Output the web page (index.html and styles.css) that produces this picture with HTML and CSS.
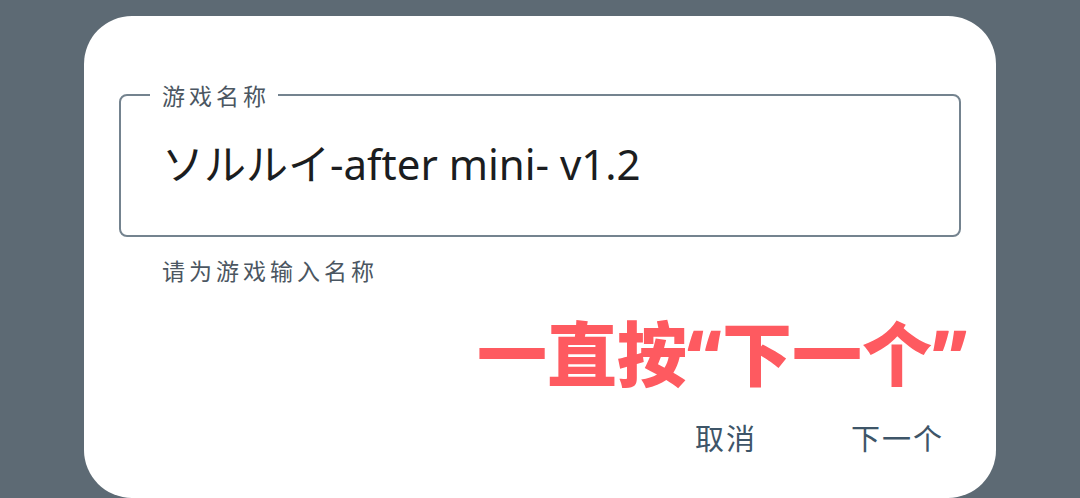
FILE: index.html
```html
<!DOCTYPE html>
<html lang="zh-CN">
<head>
    <meta charset="UTF-8">
    <meta name="viewport" content="width=device-width, initial-scale=1.0">
    <title>游戏名称</title>
    <link rel="stylesheet" href="styles.css">
</head>
<body>
    <div class="dialog">
        <fieldset class="field">
            <legend>游戏名称</legend>
            <div class="value">ソルルイ-after mini- v1.2</div>
        </fieldset>
        <p class="helper">请为游戏输入名称</p>
        <div class="hint">一直按“下一个”</div>
        <div class="actions">
            <button type="button">取消</button>
            <button type="button">下一个</button>
        </div>
    </div>
</body>
</html>
```

FILE: styles.css
```css
body {
    margin: 0;
    background: #5d6a74;
    font-family: "Noto Sans CJK SC", "Noto Sans", sans-serif;
    overflow: hidden;
}
.dialog {
    margin: 16px 0 0 84px;
    width: 912px;
    height: 482px;
    box-sizing: border-box;
    background: #ffffff;
    border-radius: 48px;
    padding: 67px 35px 0 35px;
}
.field {
    margin: 0;
    height: 154px;
    box-sizing: border-box;
    border: 2px solid #74838f;
    border-radius: 8px;
    padding: 0 0 0 41px;
}
.field legend {
    padding: 0 8px 0 12px;
    margin-left: -12px;
    font-size: 23px;
    line-height: 24px;
    color: #4b5661;
    letter-spacing: 4px;
}
.value {
    margin-top: 31px;
    font-family: "Noto Sans", "Noto Sans CJK JP", sans-serif;
    font-size: 42px;
    line-height: 52px;
    color: #1b1d20;
    white-space: nowrap;
}
.helper {
    margin: 19px 0 0 43px;
    font-size: 23px;
    line-height: 28px;
    color: #4b5661;
    letter-spacing: 4px;
}
.hint {
    margin: 30px 0 0 358px;
    font-family: "Noto Sans", "Noto Sans CJK SC", sans-serif;
    font-size: 70px;
    line-height: 80px;
    font-weight: 900;
    color: #fe5a60;
    white-space: nowrap;
}
.actions {
    display: flex;
    justify-content: flex-end;
    gap: 94px;
    margin: 23px 17px 0 0;
}
.actions button {
    border: none;
    background: none;
    padding: 0;
    font-family: inherit;
    font-size: 29px;
    line-height: 40px;
    letter-spacing: 2px;
    color: #3e5568;
}
```
